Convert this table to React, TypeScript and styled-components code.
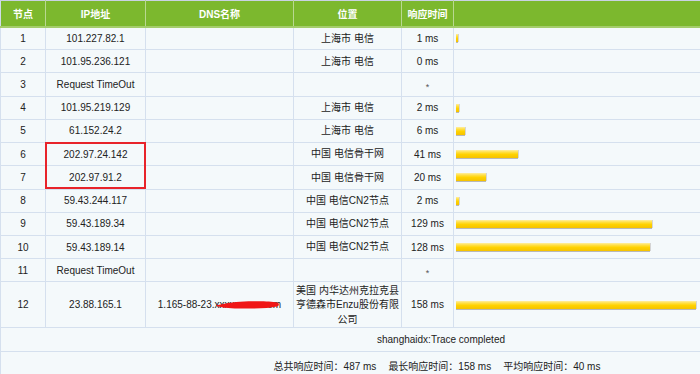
import React from 'react';
import styled, { createGlobalStyle } from 'styled-components';

const GlobalStyle = createGlobalStyle`
  html, body {
    margin: 0;
    padding: 0;
    background: #f4f9fb;
    overflow: hidden;
  }
  body {
    font-family: "Liberation Sans", "Noto Sans CJK SC", sans-serif;
  }
`;

const Page = styled.div`
  width: 700px;
  height: 374px;
  overflow: hidden;
`;

const Table = styled.table`
  width: 881px;
  table-layout: fixed;
  border-collapse: collapse;
  background: #f4f9fb;
  font-size: 10px;
  color: #222222;
  border-top: 1px solid #c9d2e3;
  border-left: 1px solid #d0dbea;
`;

const HeadRow = styled.tr`
  height: 26px;
`;

const HeadCell = styled.th`
  padding: 0;
  background: #7cb82e;
  color: #ffffff;
  font-weight: bold;
  font-size: 10px;
  text-align: center;
  vertical-align: middle;
  border-right: 1px solid #b9d892;
  border-bottom: 2px solid #a4cd6b;
`;

const Row = styled.tr<{ $tall?: boolean }>`
  height: ${(p) => (p.$tall ? '46px' : '23.23px')};
`;

const Cell = styled.td`
  position: relative;
  padding: 0 3px;
  border: 1px solid #d5e0ee;
  text-align: center;
  vertical-align: middle;
  white-space: nowrap;
`;

const LocationCell = styled(Cell)`
  padding: 1px 0 0;
  line-height: 14.5px;
`;

const BarCell = styled(Cell)`
  text-align: left;
  padding: 0 0 0 2px;
`;

const Bar = styled.div`
  height: 8px;
  background: linear-gradient(to bottom, #ffeea0 0%, #ffe04a 25%, #ffd200 55%, #f5c200 100%);
  box-shadow: 0 1px 0 #b8b8b8, 1px 0 0 #d4d4d4;
`;

const Star = styled.span`
  display: inline-block;
  font-size: 9px;
  color: #555;
  transform: translateY(2px);
`;

const MarkBox = styled.div`
  position: absolute;
  top: -1px;
  left: -1px;
  right: -1px;
  height: 47px;
  box-sizing: border-box;
  border: 2px solid #e8232a;
  pointer-events: none;
`;

const Redacted = styled.span`
  position: relative;
  display: inline-block;
`;

const Scribble = styled.svg`
  position: absolute;
  left: 58px;
  top: 1px;
  width: 64px;
  height: 10px;
`;

const FullCell = styled.td`
  padding: 0;
  border: 1px solid #d5e0ee;
  text-align: center;
  vertical-align: middle;
`;

const TraceRow = styled.tr`
  height: 24px;
`;

const StatsRow = styled.tr`
  height: 27px;
`;

const Stats = styled.div`
  display: flex;
  justify-content: center;
  gap: 12px;
  padding-right: 8px;
  white-space: nowrap;
`;

type Hop = {
  n: number;
  ip: string;
  dns?: 'redacted';
  loc?: string[];
  ms?: number;
  marked?: boolean;
};

const hops: Hop[] = [
  { n: 1, ip: '101.227.82.1', loc: ['上海市 电信'], ms: 1 },
  { n: 2, ip: '101.95.236.121', loc: ['上海市 电信'], ms: 0 },
  { n: 3, ip: 'Request TimeOut' },
  { n: 4, ip: '101.95.219.129', loc: ['上海市 电信'], ms: 2 },
  { n: 5, ip: '61.152.24.2', loc: ['上海市 电信'], ms: 6 },
  { n: 6, ip: '202.97.24.142', loc: ['中国 电信骨干网'], ms: 41, marked: true },
  { n: 7, ip: '202.97.91.2', loc: ['中国 电信骨干网'], ms: 20 },
  { n: 8, ip: '59.43.244.117', loc: ['中国 电信CN2节点'], ms: 2 },
  { n: 9, ip: '59.43.189.34', loc: ['中国 电信CN2节点'], ms: 129 },
  { n: 10, ip: '59.43.189.14', loc: ['中国 电信CN2节点'], ms: 128 },
  { n: 11, ip: 'Request TimeOut' },
  {
    n: 12,
    ip: '23.88.165.1',
    dns: 'redacted',
    loc: ['美国 内华达州克拉克县', '亨德森市Enzu股份有限', '公司'],
    ms: 158,
  },
];

const PX_PER_MS = 240 / 158;

function Location({ lines }: { lines?: string[] }) {
  if (!lines) return null;
  return (
    <>
      {lines.map((l, i) => (
        <React.Fragment key={i}>
          {i > 0 && <br />}
          {l}
        </React.Fragment>
      ))}
    </>
  );
}

export default function App() {
  return (
    <Page>
      <GlobalStyle />
      <Table>
        <colgroup>
          <col style={{ width: 45 }} />
          <col style={{ width: 100 }} />
          <col style={{ width: 148 }} />
          <col style={{ width: 108 }} />
          <col style={{ width: 52 }} />
          <col style={{ width: 428 }} />
        </colgroup>
        <thead>
          <HeadRow>
            <HeadCell>节点</HeadCell>
            <HeadCell>IP地址</HeadCell>
            <HeadCell>DNS名称</HeadCell>
            <HeadCell>位置</HeadCell>
            <HeadCell>响应时间</HeadCell>
            <HeadCell />
          </HeadRow>
        </thead>
        <tbody>
          {hops.map((h) => {
            const timeout = h.ms === undefined;
            return (
              <Row key={h.n} $tall={h.n === 12}>
                <Cell>{h.n}</Cell>
                <Cell>
                  {h.ip}
                  {h.marked && <MarkBox />}
                </Cell>
                <Cell>
                  {h.dns && (
                    <Redacted>
                      1.165-88-23.xxxxxxxxx.com
                      <Scribble viewBox="0 0 64 10">
                        <path
                          d="M0 5.4 C2 5 4 4.6 7 4 C14 2.4 25 1.4 37 1.2 C47 1 56 1.4 61 2.6 C63.5 3.4 63.5 5.6 61 6.6 C54 8.2 43 8.6 31 8.6 C19 8.6 10 8.2 5 7 C2.5 6.6 0.5 6.2 0 5.4 Z"
                          fill="#f01616"
                        />
                      </Scribble>
                    </Redacted>
                  )}
                </Cell>
                <LocationCell>
                  <Location lines={h.loc} />
                </LocationCell>
                <Cell>{timeout ? <Star>*</Star> : `${h.ms} ms`}</Cell>
                <BarCell>
                  {!timeout && h.ms! > 0 && (
                    <Bar style={{ width: `${h.ms! * PX_PER_MS}px` }} />
                  )}
                </BarCell>
              </Row>
            );
          })}
          <TraceRow>
            <FullCell colSpan={6}>shanghaidx:Trace completed</FullCell>
          </TraceRow>
          <StatsRow>
            <FullCell colSpan={6}>
              <Stats>
                <span>总共响应时间：487 ms</span>
                <span>最长响应时间：158 ms</span>
                <span>平均响应时间：40 ms</span>
              </Stats>
            </FullCell>
          </StatsRow>
        </tbody>
      </Table>
    </Page>
  );
}
